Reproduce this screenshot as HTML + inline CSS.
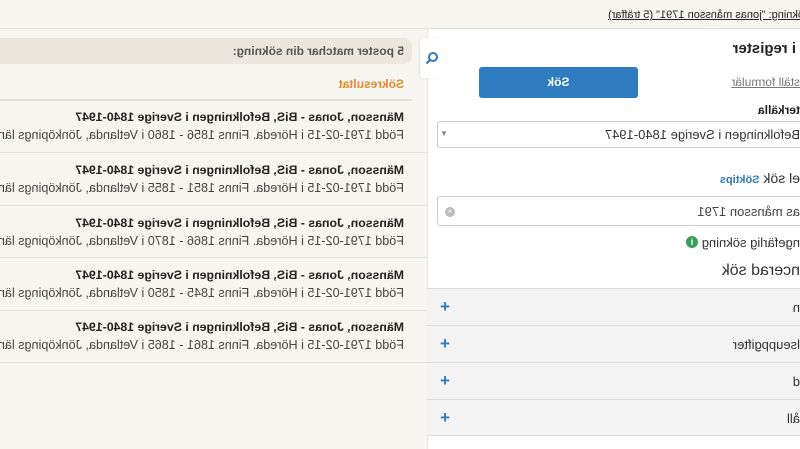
<!DOCTYPE html>
<html><head><meta charset="utf-8"><style>
*{margin:0;padding:0;box-sizing:border-box}
html,body{width:800px;height:449px;overflow:hidden}
body{font-family:"Liberation Sans",sans-serif;background:#f7f5ef;position:relative;transform:scaleX(-1);color:#333}
.a{position:absolute;white-space:nowrap}
.top{left:0;top:0;width:800px;height:29px;background:#f7f5ef;border-bottom:1px solid #e4e1da}
.left{left:0;top:29px;width:373px;height:420px;background:#fff;border-right:1px solid #e6e3dc}
.acc{left:0;width:373px;height:37px;background:#f3f3f3;border-top:1px solid #ddd;font-size:13px;color:#333}
.acc span{position:absolute;top:11px}
.acc b{position:absolute;left:350px;top:8px;color:#2f7bbf;font-size:17px}
.rt{font-size:12.3px;font-weight:bold;color:#222;left:396px}
.rs{font-size:12.6px;color:#444;left:396px}
.sep{left:373px;width:427px;height:1px;background:#e4e1da}
</style></head><body>
<div class="a top"></div>
<div class="a" style="left:-4px;top:9px;font-size:11px;text-decoration:underline;color:#222">ökning: "jonas månsson 1791" (5 träffar)</div>
<div class="a left"></div>
<div class="a" style="left:355px;top:38px;width:25px;height:40px;background:#fff;border-radius:0 4px 4px 0;box-shadow:1px 0 2px rgba(0,0,0,.08)"></div>
<svg class="a" style="left:361px;top:51px" width="14" height="14" viewBox="0 0 14 14"><circle cx="6" cy="6" r="4" fill="none" stroke="#2f7bbf" stroke-width="2"/><path d="M9 9l3.5 3.5" stroke="#2f7bbf" stroke-width="2.2"/></svg>
<div class="a" style="left:4px;top:40px;font-size:15px;font-weight:bold;color:#222">i register</div>
<div class="a" style="left:0;top:75px;font-size:12px;color:#777;text-decoration:underline">ställ formulär</div>
<div class="a" style="left:162px;top:67px;width:159px;height:31px;background:#2f7bbf;border-radius:3px;color:#fff;font-weight:bold;font-size:12px;text-align:center;line-height:31px">Sök</div>
<div class="a" style="left:0;top:103px;font-size:12px;font-weight:bold;color:#222">terkälla</div>
<div class="a" style="left:-5px;top:121px;width:368px;height:27px;border:1px solid #ccc;border-radius:3px;background:#fff"></div>
<div class="a" style="left:0;top:127px;font-size:13px;color:#333">Befolkningen i Sverige 1840-1947</div>
<div class="a" style="left:352px;top:129px;font-size:8px;color:#888">▼</div>
<div class="a" style="left:0;top:170px;font-size:14px;color:#333">el sök <b style="font-size:11px;color:#2f7bbf">Söktips</b></div>
<div class="a" style="left:-5px;top:196px;width:368px;height:30px;border:1px solid #ccc;border-radius:3px;background:#fff"></div>
<div class="a" style="left:0;top:204px;font-size:13px;color:#444">as månsson 1791</div>
<div class="a" style="left:345px;top:207px;width:10px;height:10px;border-radius:50%;background:#bbb;color:#fff;font-size:8px;line-height:10px;text-align:center">×</div>
<div class="a" style="left:0;top:235px;font-size:13px;color:#333">ngefärlig sökning</div>
<div class="a" style="left:102px;top:236px;width:12px;height:12px;border-radius:50%;background:#3a9e5b;color:#fff;font-size:9px;font-weight:bold;line-height:12px;text-align:center">i</div>
<div class="a" style="left:0;top:262px;font-size:16px;color:#333">ncerad sök</div>
<div class="a acc" style="top:288px"><span style="left:0">n</span><b>+</b></div>
<div class="a acc" style="top:325px"><span style="left:0">lseuppgifter</span><b>+</b></div>
<div class="a acc" style="top:362px"><span style="left:0">d</span><b>+</b></div>
<div class="a acc" style="top:399px;border-bottom:1px solid #ddd"><span style="left:0">åll</span><b>+</b></div>
<div class="a" style="left:388px;top:38px;width:420px;height:26px;background:#ebe7df;border-radius:8px"></div>
<div class="a" style="left:396px;top:44px;font-size:12px;font-weight:bold;color:#555">5 poster matchar din sökning:</div>
<div class="a" style="left:396px;top:77px;font-size:12px;font-weight:bold;color:#e08a2c">Sökresultat</div>
<div class="a sep" style="top:99px;left:388px;height:2px"></div>
<div class="a rt" style="top:110px">Mänsson, Jonas - BiS, Befolkningen i Sverige 1840-1947</div>
<div class="a rs" style="top:128px">Född 1791-02-15 i Höreda. Finns 1856 - 1860 i Vetlanda, Jönköpings län</div>
<div class="a sep" style="top:152px"></div>
<div class="a rt" style="top:163px">Mänsson, Jonas - BiS, Befolkningen i Sverige 1840-1947</div>
<div class="a rs" style="top:181px">Född 1791-02-15 i Höreda. Finns 1851 - 1855 i Vetlanda, Jönköpings län</div>
<div class="a sep" style="top:205px"></div>
<div class="a rt" style="top:216px">Mänsson, Jonas - BiS, Befolkningen i Sverige 1840-1947</div>
<div class="a rs" style="top:234px">Född 1791-02-15 i Höreda. Finns 1866 - 1870 i Vetlanda, Jönköpings län</div>
<div class="a sep" style="top:257px"></div>
<div class="a rt" style="top:268px">Mänsson, Jonas - BiS, Befolkningen i Sverige 1840-1947</div>
<div class="a rs" style="top:286px">Född 1791-02-15 i Höreda. Finns 1845 - 1850 i Vetlanda, Jönköpings län</div>
<div class="a sep" style="top:310px"></div>
<div class="a rt" style="top:320px">Mänsson, Jonas - BiS, Befolkningen i Sverige 1840-1947</div>
<div class="a rs" style="top:338px">Född 1791-02-15 i Höreda. Finns 1861 - 1865 i Vetlanda, Jönköpings län</div>
<div class="a sep" style="top:362px"></div>
</body></html>
